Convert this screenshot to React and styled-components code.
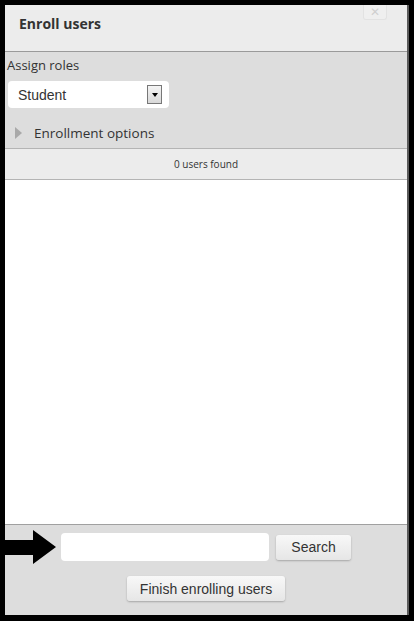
import React from 'react'
import styled, { createGlobalStyle } from 'styled-components';

const GlobalStyle = createGlobalStyle`
  html, body {
    margin: 0;
    padding: 0;
    background: #000;
  }
  body {
    font-family: "Open Sans", "DejaVu Sans", sans-serif;
  }
`;

const Frame = styled.div`
  position: relative;
  width: 414px;
  height: 621px;
  padding: 5px 5px 6px 5px;
  box-sizing: border-box;
  background: #000;
`;

const Dialog = styled.div`
  height: 100%;
  display: flex;
  flex-direction: column;
  background: #dddddd;
  border-right: 2px solid #5a5a5a;
  box-sizing: border-box;
`;

const Header = styled.div`
  position: relative;
  height: 46px;
  display: flex;
  align-items: center;
  padding-left: 14px;
  background: #ececec;
  border-bottom: 1px solid #9a9a9a;
  flex-shrink: 0;
`;

const Title = styled.h2`
  margin: -9px 0 0 0;
  font-size: 14px;
  font-weight: 700;
  color: #333;
`;

const CloseButton = styled.button`
  position: absolute;
  top: 0;
  right: 20px;
  width: 24px;
  height: 15px;
  padding: 0;
  border: 1px solid #e2e2e2;
  border-top: none;
  border-radius: 0 0 3px 3px;
  background: #efefef;
  color: #d0d0d0;
  font-size: 12px;
  line-height: 12px;
  font-family: "Liberation Sans", Arial, sans-serif;
`;

const Options = styled.div`
  height: 97px;
  padding: 5px 0 0 2px;
  box-sizing: border-box;
  border-bottom: 1px solid #b4b4b4;
  flex-shrink: 0;
`;

const Label = styled.div`
  font-size: 13px;
  color: #333;
  line-height: 16px;
`;

const Select = styled.div`
  margin: 8px 0 0 1px;
  width: 161px;
  height: 27px;
  background: #fff;
  border-radius: 4px;
  display: flex;
  align-items: center;
  justify-content: space-between;
  padding: 0 7px 0 10px;
  box-sizing: border-box;
  font-family: "Liberation Sans", Arial, sans-serif;
  font-size: 14px;
  color: #333;
`;

const DropArrow = styled.span`
  width: 13px;
  height: 17px;
  border: 1px solid #777;
  background: linear-gradient(#f4f4f4, #d8d8d8);
  display: flex;
  align-items: center;
  justify-content: center;
  &::after {
    content: '';
    border-left: 3px solid transparent;
    border-right: 3px solid transparent;
    border-top: 4px solid #000;
  }
`;

const Toggle = styled.div`
  display: flex;
  align-items: center;
  gap: 12px;
  margin: 16px 0 0 8px;
  font-size: 13.5px;
  color: #333;
`;

const Caret = styled.span`
  width: 0;
  height: 0;
  border-top: 6px solid transparent;
  border-bottom: 6px solid transparent;
  border-left: 7px solid #a9a9a9;
`;

const Count = styled.div`
  height: 30px;
  display: flex;
  align-items: center;
  justify-content: center;
  background: #ececec;
  border-bottom: 1px solid #b4b4b4;
  font-size: 10px;
  color: #333;
  flex-shrink: 0;
`;

const Results = styled.div`
  flex: 1;
  background: #fff;
  border-bottom: 1px solid #a0a0a0;
`;

const Footer = styled.div`
  height: 90px;
  flex-shrink: 0;
  display: flex;
  flex-direction: column;
  align-items: center;
  padding-top: 8px;
  box-sizing: border-box;
  gap: 15px;
`;

const SearchRow = styled.div`
  display: flex;
  align-items: center;
  gap: 7px;
`;

const Input = styled.input`
  width: 208px;
  height: 28px;
  border: none;
  border-radius: 4px;
  background: #fff;
  box-sizing: border-box;
  outline: none;
`;

const Button = styled.button`
  height: 25px;
  padding: 0 ${p => p.$pad}px;
  border: none;
  border-radius: 3px;
  background: linear-gradient(#f8f8f8, #e6e6e6);
  box-shadow: 0 1px 2px rgba(0, 0, 0, 0.25);
  font-family: "Liberation Sans", Arial, sans-serif;
  font-size: 14px;
  color: #333;
`;

const Pointer = styled.svg`
  position: absolute;
  left: 0;
  top: 530px;
`;

export default function App() {
  return (
    <>
      <GlobalStyle />
      <Frame>
        <Dialog>
          <Header>
            <Title>Enroll users</Title>
            <CloseButton>✕</CloseButton>
          </Header>
          <Options>
            <Label>Assign roles</Label>
            <Select>
              Student
              <DropArrow />
            </Select>
            <Toggle>
              <Caret />
              Enrollment options
            </Toggle>
          </Options>
          <Count>0 users found</Count>
          <Results />
          <Footer>
            <SearchRow>
              <Input />
              <Button $pad={15}>Search</Button>
            </SearchRow>
            <Button $pad={13}>Finish enrolling users</Button>
          </Footer>
        </Dialog>
        <Pointer width="56" height="34" viewBox="0 0 56 34">
          <polygon points="0,10 33,10 33,0 56,17 33,34 33,25 0,25" fill="#000" />
        </Pointer>
      </Frame>
    </>
  );
}
